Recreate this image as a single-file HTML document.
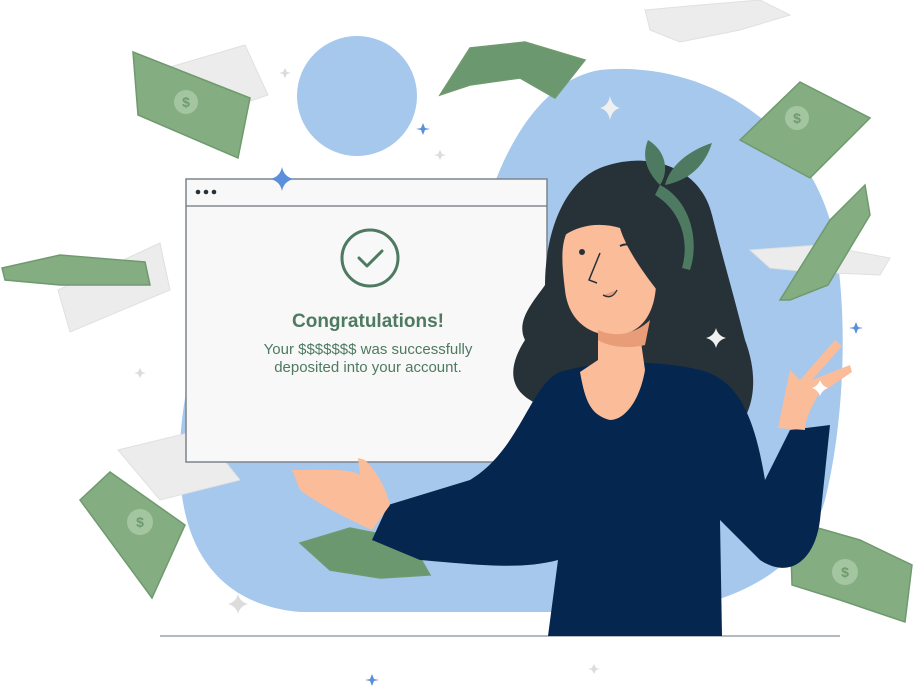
<!DOCTYPE html>
<html><head><meta charset="utf-8"><style>
html,body{margin:0;padding:0;background:#fff;width:913px;height:687px;overflow:hidden}
svg{display:block}
text{font-family:"Liberation Sans",sans-serif}
</style></head><body>
<svg width="913" height="687" viewBox="0 0 913 687" xmlns="http://www.w3.org/2000/svg">
<path d="M600 70 C700 60 800 120 830 220 C850 300 845 420 825 500 C805 570 730 610 640 612 L300 612 C220 605 182 550 180 470 C178 420 190 330 230 300 L480 230 C500 150 540 80 600 70 Z" fill="#a6c8ec"/>
<circle cx="357" cy="96" r="60" fill="#a6c8ec"/>
<line x1="160" y1="636" x2="840" y2="636" stroke="#9aa3ab" stroke-width="1.5"/>
<g fill="#ececec" stroke="#e0e0e0">
<path d="M645 10 L700 5 L760 0 L790 15 L740 30 L680 42 L650 30 Z"/>
<path d="M160 70 L245 45 L268 95 L180 125 Z"/>
<path d="M58 290 L160 243 L170 290 L70 332 Z"/>
<path d="M750 250 L820 245 L890 258 L880 275 L810 272 L770 268 Z"/>
<path d="M118 450 L200 430 L240 480 L160 500 Z"/>
</g>
<g fill="#84ad82" stroke="#6f9a6e" stroke-width="1.5">
<path d="M133 52 L250 98 L238 158 L138 115 Z"/>
<path d="M440 95 L470 48 L525 42 L585 60 L555 98 L520 78 L470 85 Z" fill="#6c9870"/>
<path d="M740 140 L800 82 L870 118 L810 178 Z"/>
<path d="M780 300 L830 220 L865 185 L870 215 L828 285 L790 300 Z"/>
<path d="M2 268 L60 255 L145 262 L150 285 L60 285 L5 280 Z"/>
<path d="M80 500 L110 472 L185 525 L152 598 Z"/>
<path d="M300 543 L350 528 L410 540 L430 575 L380 578 L330 570 Z" fill="#6c9870"/>
<path d="M790 520 L860 540 L912 565 L905 622 L840 600 L792 585 Z"/>
</g>
<g fill="#a3c6a0">
<circle cx="186" cy="102" r="12"/><circle cx="797" cy="118" r="12"/><circle cx="140" cy="522" r="13"/><circle cx="845" cy="572" r="13"/>
</g>
<g fill="#6f9a6e" font-weight="bold" font-size="14" text-anchor="middle">
<text x="186" y="107">$</text><text x="797" y="123">$</text><text x="140" y="527">$</text><text x="845" y="577">$</text>
</g>
<rect x="186" y="179" width="361" height="283" fill="#f8f8f8" stroke="#7d848b" stroke-width="1.5"/>
<line x1="186" y1="206" x2="547" y2="206" stroke="#6e757c" stroke-width="1.2"/>
<g fill="#263238"><circle cx="198" cy="192" r="2.3"/><circle cx="206" cy="192" r="2.3"/><circle cx="214" cy="192" r="2.3"/></g>
<circle cx="370" cy="258" r="28" fill="none" stroke="#4e7a62" stroke-width="3"/>
<path d="M359 258 L367 266 L382 251" fill="none" stroke="#4e7a62" stroke-width="3" stroke-linecap="round" stroke-linejoin="round"/>
<text x="368" y="327" text-anchor="middle" font-size="19" font-weight="bold" fill="#4e7a62">Congratulations!</text>
<text x="368" y="354" text-anchor="middle" font-size="15" fill="#4e7a62">Your $$$$$$$ was successfully</text>
<text x="368" y="372" text-anchor="middle" font-size="15" fill="#4e7a62">deposited into your account.</text>
<path d="M282 167 Q284 177 294 179 Q284 181 282 191 Q280 181 270 179 Q280 177 282 167Z" fill="#5b8fdc"/>
<!-- hair back, wavy -->
<path d="M600 168 C645 150 700 165 712 215 C722 255 735 300 745 340 C760 380 752 410 740 425 C735 440 720 445 700 445 L640 440 C600 430 560 420 530 400 C505 385 512 360 525 340 C515 320 535 300 545 285 C545 240 560 185 600 168Z" fill="#263238"/>
<path d="M560 372 C600 360 660 360 700 370 C740 380 755 420 765 480 L790 430 L830 425 L820 520 C815 560 790 580 760 560 L720 520 L722 636 L548 636 L558 560 C520 570 480 565 420 560 L372 540 L388 505 L470 480 C520 450 530 385 560 372Z" fill="#04264f"/>
<path d="M598 330 L640 335 L645 370 C640 400 625 420 610 420 C590 415 585 400 580 372 L598 360Z" fill="#fbbc9a"/>
<path d="M568 230 C600 205 650 215 655 260 C660 300 650 330 620 335 C590 338 568 320 565 290 C562 265 560 245 568 230Z" fill="#fbbc9a"/>
<path d="M598 330 C620 340 640 330 650 320 L645 345 C625 350 605 345 598 340Z" fill="#e89d78"/>
<path d="M565 235 C580 195 630 180 655 210 C665 240 660 270 665 300 C640 270 625 245 620 228 C600 222 580 225 565 235Z" fill="#263238"/>
<path d="M648 140 C665 150 670 170 660 185 C645 170 642 155 648 140Z" fill="#4e7a62"/>
<path d="M712 143 C705 165 690 180 665 185 C670 165 690 150 712 143Z" fill="#4e7a62"/>
<path d="M660 185 C690 200 700 240 690 270 L682 268 C690 240 680 210 655 195Z" fill="#4e7a62"/>
<circle cx="582" cy="252" r="3" fill="#263238"/>
<path d="M620 246 Q628 242 636 248" fill="none" stroke="#263238" stroke-width="2"/>
<path d="M600 253 L589 280 L597 283" fill="none" stroke="#263238" stroke-width="1.5"/>
<path d="M603 295 Q612 300 617 290" fill="#e89d78" stroke="#263238" stroke-width="1.3"/>
<path d="M292 470 C320 470 350 468 360 475 L358 458 L365 460 C375 470 385 485 390 505 L372 530 C350 520 320 505 300 490 Z" fill="#fbbc9a"/>
<path d="M778 428 L790 370 L800 380 L835 340 L842 346 L812 380 L850 365 L852 372 L818 395 C810 410 805 420 805 430Z" fill="#fbbc9a"/>
<g fill="#f0f0f0">
<path d="M610 96 Q612 106 620 108 Q612 110 610 120 Q608 110 600 108 Q608 106 610 96Z"/>
<path d="M716 328 Q718 336 726 338 Q718 340 716 348 Q714 340 706 338 Q714 336 716 328Z"/>
<path d="M238 594 Q240 602 248 604 Q240 606 238 614 Q236 606 228 604 Q236 602 238 594Z" fill="#dcdcdc"/>
<path d="M820 380 Q822 386 828 388 Q822 390 820 396 Q818 390 812 388 Q818 386 820 380Z" fill="#fff"/>
</g>
<g fill="#5b8fdc">
<path d="M423 123 L425 128 L430 129 L425 130 L423 135 L421 130 L416 129 L421 128Z"/>
<path d="M856 322 L858 327 L863 328 L858 329 L856 334 L854 329 L849 328 L854 327Z"/>
<path d="M372 674 L374 679 L379 680 L374 681 L372 686 L370 681 L365 680 L370 679Z"/>
</g>
<g fill="#dcdcdc">
<path d="M285 68 L287 72 L291 73 L287 74 L285 78 L283 74 L279 73 L283 72Z"/>
<path d="M440 150 L442 154 L446 155 L442 156 L440 160 L438 156 L434 155 L438 154Z"/>
<path d="M594 664 L596 668 L600 669 L596 670 L594 674 L592 670 L588 669 L592 668Z"/>
<path d="M140 368 L142 372 L146 373 L142 374 L140 378 L138 374 L134 373 L138 372Z"/>
</g>
</svg>
</body></html>
